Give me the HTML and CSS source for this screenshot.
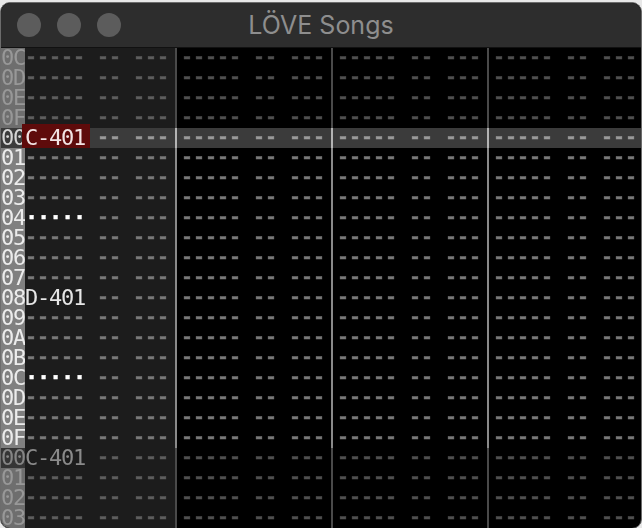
FILE: index.html
```html
<!DOCTYPE html>
<html>
<head>
<meta charset="utf-8">
<title>LÖVE Songs</title>
<link rel="stylesheet" href="styles.css">
</head>
<body>
<div class="window">
  <div class="titlebar">
    <div class="lights"><span class="light"></span><span class="light"></span><span class="light"></span></div>
    <div class="title">LÖVE Songs</div>
  </div>
  <div class="grid">
    <div class="row dim"><span class="num">0C</span><span class="ch sel">----- -- ---</span><span class="ch">----- -- ---</span><span class="ch">----- -- ---</span><span class="ch">----- -- ---</span></div>
    <div class="row dim"><span class="num">0D</span><span class="ch sel">----- -- ---</span><span class="ch">----- -- ---</span><span class="ch">----- -- ---</span><span class="ch">----- -- ---</span></div>
    <div class="row dim"><span class="num">0E</span><span class="ch sel">----- -- ---</span><span class="ch">----- -- ---</span><span class="ch">----- -- ---</span><span class="ch">----- -- ---</span></div>
    <div class="row dim"><span class="num">0F</span><span class="ch sel">----- -- ---</span><span class="ch">----- -- ---</span><span class="ch">----- -- ---</span><span class="ch">----- -- ---</span></div>
    <div class="row hl"><span class="num">00</span><span class="ch sel"><span class="note cursor">C-401</span> -- ---</span><span class="ch">----- -- ---</span><span class="ch">----- -- ---</span><span class="ch">----- -- ---</span></div>
    <div class="row"><span class="num">01</span><span class="ch sel">----- -- ---</span><span class="ch">----- -- ---</span><span class="ch">----- -- ---</span><span class="ch">----- -- ---</span></div>
    <div class="row"><span class="num">02</span><span class="ch sel">----- -- ---</span><span class="ch">----- -- ---</span><span class="ch">----- -- ---</span><span class="ch">----- -- ---</span></div>
    <div class="row"><span class="num">03</span><span class="ch sel">----- -- ---</span><span class="ch">----- -- ---</span><span class="ch">----- -- ---</span><span class="ch">----- -- ---</span></div>
    <div class="row"><span class="num">04</span><span class="ch sel"><span class="note off">·····</span> -- ---</span><span class="ch">----- -- ---</span><span class="ch">----- -- ---</span><span class="ch">----- -- ---</span></div>
    <div class="row"><span class="num">05</span><span class="ch sel">----- -- ---</span><span class="ch">----- -- ---</span><span class="ch">----- -- ---</span><span class="ch">----- -- ---</span></div>
    <div class="row"><span class="num">06</span><span class="ch sel">----- -- ---</span><span class="ch">----- -- ---</span><span class="ch">----- -- ---</span><span class="ch">----- -- ---</span></div>
    <div class="row"><span class="num">07</span><span class="ch sel">----- -- ---</span><span class="ch">----- -- ---</span><span class="ch">----- -- ---</span><span class="ch">----- -- ---</span></div>
    <div class="row"><span class="num">08</span><span class="ch sel"><span class="note">D-401</span> -- ---</span><span class="ch">----- -- ---</span><span class="ch">----- -- ---</span><span class="ch">----- -- ---</span></div>
    <div class="row"><span class="num">09</span><span class="ch sel">----- -- ---</span><span class="ch">----- -- ---</span><span class="ch">----- -- ---</span><span class="ch">----- -- ---</span></div>
    <div class="row"><span class="num">0A</span><span class="ch sel">----- -- ---</span><span class="ch">----- -- ---</span><span class="ch">----- -- ---</span><span class="ch">----- -- ---</span></div>
    <div class="row"><span class="num">0B</span><span class="ch sel">----- -- ---</span><span class="ch">----- -- ---</span><span class="ch">----- -- ---</span><span class="ch">----- -- ---</span></div>
    <div class="row"><span class="num">0C</span><span class="ch sel"><span class="note off">·····</span> -- ---</span><span class="ch">----- -- ---</span><span class="ch">----- -- ---</span><span class="ch">----- -- ---</span></div>
    <div class="row"><span class="num">0D</span><span class="ch sel">----- -- ---</span><span class="ch">----- -- ---</span><span class="ch">----- -- ---</span><span class="ch">----- -- ---</span></div>
    <div class="row"><span class="num">0E</span><span class="ch sel">----- -- ---</span><span class="ch">----- -- ---</span><span class="ch">----- -- ---</span><span class="ch">----- -- ---</span></div>
    <div class="row"><span class="num">0F</span><span class="ch sel">----- -- ---</span><span class="ch">----- -- ---</span><span class="ch">----- -- ---</span><span class="ch">----- -- ---</span></div>
    <div class="row dim start"><span class="num">00</span><span class="ch sel"><span class="note">C-401</span> -- ---</span><span class="ch">----- -- ---</span><span class="ch">----- -- ---</span><span class="ch">----- -- ---</span></div>
    <div class="row dim"><span class="num">01</span><span class="ch sel">----- -- ---</span><span class="ch">----- -- ---</span><span class="ch">----- -- ---</span><span class="ch">----- -- ---</span></div>
    <div class="row dim"><span class="num">02</span><span class="ch sel">----- -- ---</span><span class="ch">----- -- ---</span><span class="ch">----- -- ---</span><span class="ch">----- -- ---</span></div>
    <div class="row dim"><span class="num">03</span><span class="ch sel">----- -- ---</span><span class="ch">----- -- ---</span><span class="ch">----- -- ---</span><span class="ch">----- -- ---</span></div>
  </div>
</div>
</body>
</html>
```

FILE: styles.css
```css
html, body {
  margin: 0;
  padding: 0;
  background: #e8e8e8;
  overflow: hidden;
}

.window {
  margin-top: 2px;
  width: 640px;
  height: 525px;
  border: 1px solid #6c6c6c;
  border-radius: 10px;
  overflow: hidden;
  background: #000;
}

.titlebar {
  position: relative;
  height: 44px;
  background: #2d2d2d;
  border-bottom: 1px solid #111;
  display: flex;
  align-items: center;
  justify-content: center;
}

.lights {
  position: absolute;
  left: 16px;
  top: 10px;
  display: flex;
  gap: 16px;
}

.light {
  width: 24px;
  height: 24px;
  border-radius: 50%;
  background: #5c5c5c;
}

.title {
  font-family: Inter, "Noto Sans", sans-serif;
  font-size: 25px;
  color: #8e8e8e;
}

.grid {
  display: flex;
  flex-direction: column;
  line-height: 20px;
  will-change: transform;
}

.row {
  display: flex;
  flex: 0 0 20px;
  height: 20px;
  color: #7a7a7a;
}

.num {
  flex: 0 0 24px;
  width: 24px;
  background: #808080;
  color: #ececec;
  white-space: pre;
  font-family: "DejaVu Sans Mono", monospace;
  font-size: 22px;
  letter-spacing: -1.245px;
}

.ch {
  flex: 0 0 144px;
  width: 144px;
  padding-right: 6px;
  margin-right: 4px;
  border-right: 2px solid #8a8a8a;
  white-space: pre;
  font-family: "Liberation Mono", monospace;
  font-size: 20px;
  font-weight: bold;
  -webkit-text-stroke: 0.6px currentColor;
}

.ch.sel {
  background: #1c1c1c;
}

.note {
  font-family: "DejaVu Sans Mono", monospace;
  font-size: 22px;
  letter-spacing: -1.245px;
  font-weight: normal;
  line-height: 0;
  vertical-align: -2px;
  color: #e6e6e6;
  -webkit-text-stroke: 0;
}

.note.off {
  color: #ffffff;
  font-weight: bold;
  -webkit-text-stroke: 0.4px currentColor;
}

.note.cursor {
  background: #5e0b0b;
  color: #f2e4e4;
  padding: 1px 0 2px;
  box-shadow: -3px 0 0 #5e0b0b, 5px 0 0 #5e0b0b;
}

/* previous / next pattern rows */
.row.dim {
  color: #505050;
}

.row.dim .num {
  background: #6e6e6e;
  color: #989898;
}

.row.dim .ch {
  border-right-color: #4a4a4a;
}

.row.dim .ch.sel {
  color: #5e5e5e;
}

.row.dim .note {
  color: #8a8a8a;
}

.row.dim.start .num {
  background: #353535;
  color: #858585;
}

/* cursor row */
.row.hl {
  background: #3b3b3b;
  color: #9a9a9a;
}

.row.hl .num {
  background: transparent;
  color: #d6d6d6;
}

.row.hl .ch,
.row.hl .ch.sel {
  background: transparent;
  border-right-color: #b4b4b4;
}
```
